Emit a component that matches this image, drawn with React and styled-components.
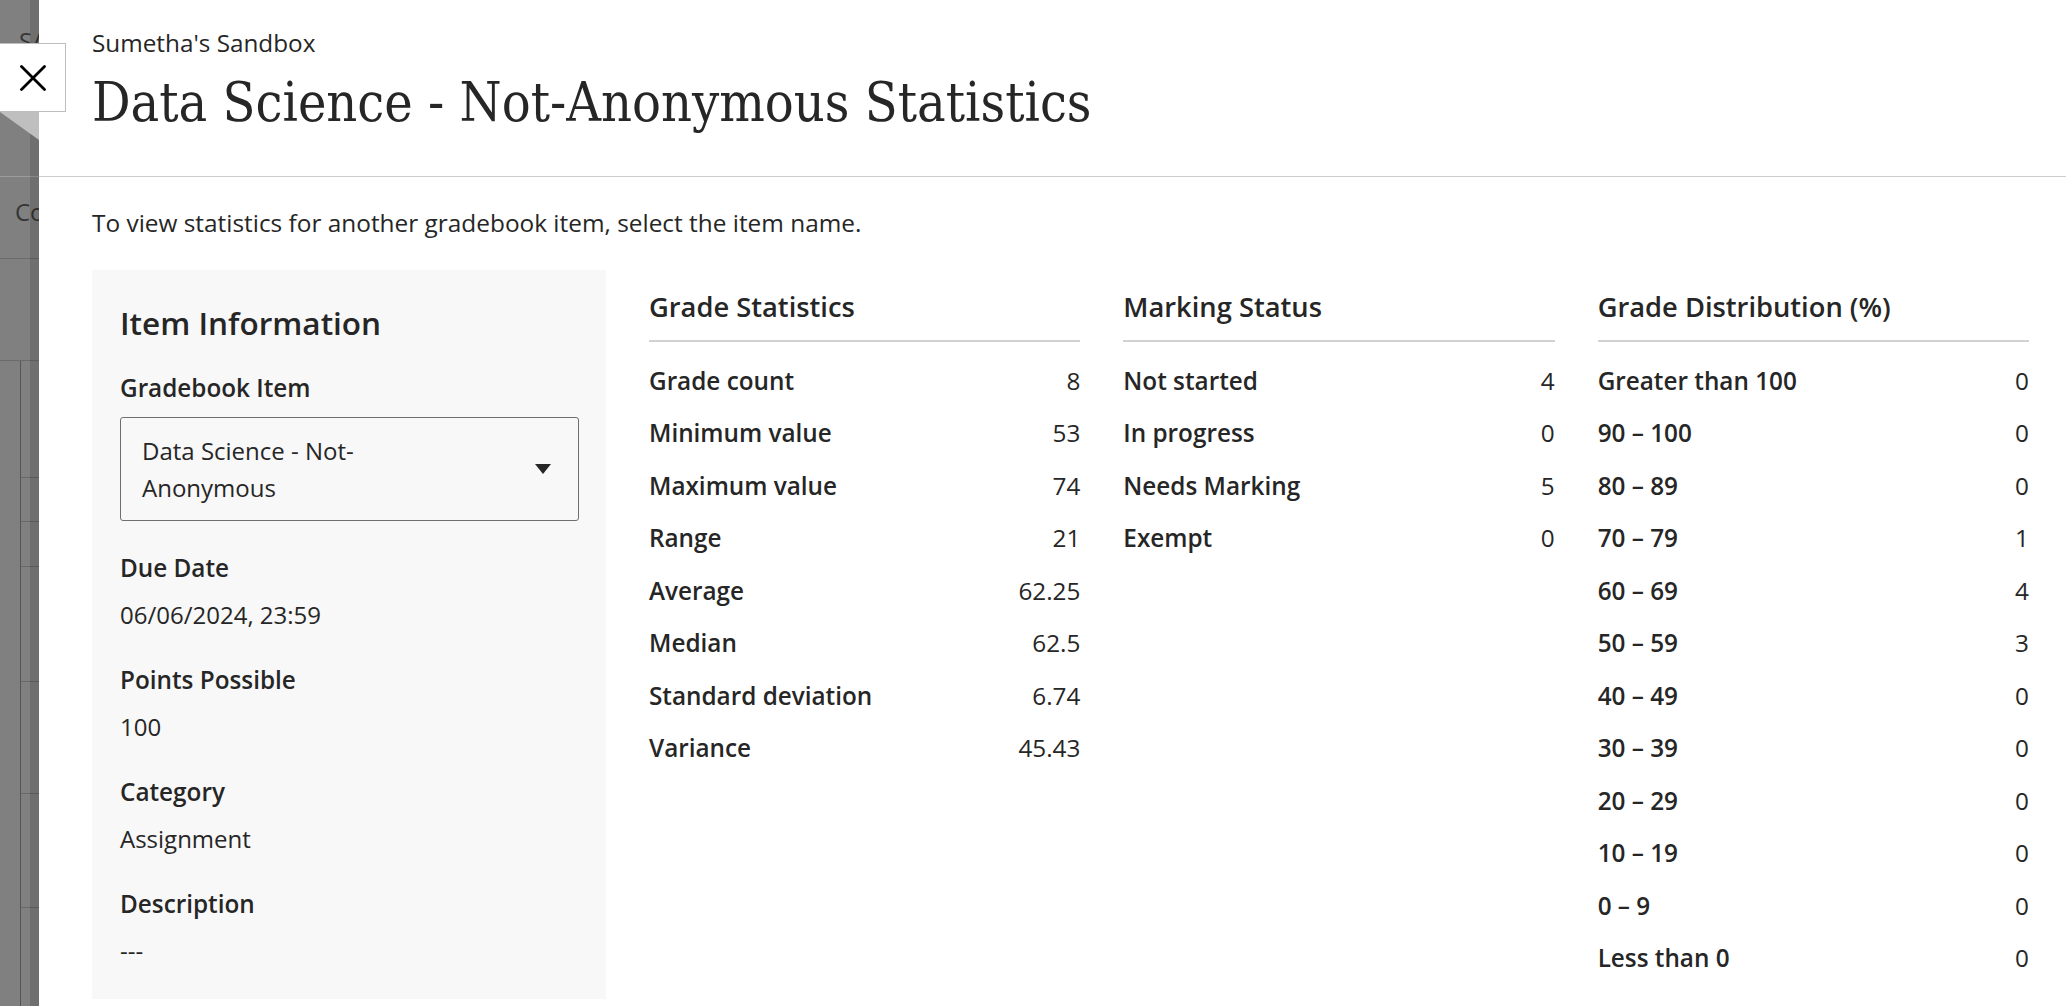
import React from "react";
import styled, { createGlobalStyle } from "styled-components";

const GlobalStyle = createGlobalStyle`
  html, body {
    margin: 0;
    padding: 0;
    height: 100%;
    overflow: hidden;
  }
  body {
    font-family: "Open Sans", "Noto Sans", sans-serif;
    color: #262626;
    background: #ffffff;
  }
  #root {
    height: 100%;
  }
`;

const Page = styled.div`
  position: relative;
  display: flex;
  height: 100vh;
`;

/* the dimmed gradebook page peeking out on the left */
const Backdrop = styled.div`
  position: relative;
  flex: 0 0 39px;
  overflow: hidden;
  background: #808080;
  color: #363636;
  font-size: 24px;
  line-height: 36px;
  white-space: nowrap;
  &::after {
    content: "";
    position: absolute;
    top: 0;
    right: 0;
    bottom: 0;
    width: 9px;
    background: rgba(0, 0, 0, 0.13);
  }
`;

const BackdropBlock = styled.div`
  box-sizing: border-box;
  height: ${(p) => p.$h}px;
  padding: ${(p) => p.$pad || "0"};
  border-bottom: 1px solid ${(p) => p.$line || "#6a6a6a"};
`;

const BackdropGrid = styled.div`
  display: flex;
`;

const BackdropGutter = styled.div`
  flex: 0 0 20px;
  border-right: 1px solid #555555;
`;

const BackdropCells = styled.div`
  flex: 1;
`;

const BackdropCell = styled.div`
  box-sizing: border-box;
  height: ${(p) => p.$h}px;
  border-bottom: 1px solid #686868;
`;

const CloseButton = styled.button`
  position: absolute;
  left: -1px;
  top: 43px;
  width: 67px;
  height: 69px;
  box-sizing: border-box;
  padding: 0;
  display: flex;
  align-items: center;
  justify-content: center;
  background: #ffffff;
  border: 1px solid #bdbdbd;
  cursor: pointer;
  z-index: 2;
`;

const Fold = styled.div`
  position: absolute;
  left: 0;
  top: 112px;
  width: 0;
  height: 0;
  border-top: 28px solid #bfbfbf;
  border-left: 39px solid transparent;
  z-index: 2;
`;

const Panel = styled.main`
  flex: 1;
  min-width: 0;
  display: flex;
  flex-direction: column;
  background: #ffffff;
`;

const Header = styled.header`
  padding: 25px 53px 41px;
  border-bottom: 1px solid #cdcdcd;
`;

const Course = styled.div`
  font-size: 24.3px;
  line-height: 36px;
`;

const Title = styled.h1`
  margin: 10px 0 0;
  font-family: "DejaVu Serif Condensed", "DejaVu Serif", serif;
  font-weight: 400;
  font-size: 53.5px;
  line-height: 64px;
  color: #262626;
`;

const Content = styled.div`
  padding: 28px 37px 0 53px;
`;

const Hint = styled.p`
  margin: 0;
  font-size: 24.4px;
  line-height: 36px;
`;

const Layout = styled.div`
  margin-top: 29px;
  display: grid;
  grid-template-columns: 514px repeat(3, 1fr);
  column-gap: 43px;
  align-items: start;
`;

const InfoCard = styled.section`
  background: #f8f8f8;
  padding: 31px 27px 30px 28px;
`;

const CardTitle = styled.h2`
  margin: 0 0 25px;
  font-size: 31.5px;
  font-weight: 600;
  line-height: 44px;
`;

const Field = styled.div`
  & + & {
    margin-top: 29px;
  }
`;

const FieldLabel = styled.div`
  font-size: 24.3px;
  font-weight: 600;
  line-height: 36px;
  margin-bottom: 11px;
`;

const FieldValue = styled.div`
  font-size: 24px;
  line-height: 36px;
`;

const Select = styled.div`
  display: flex;
  align-items: center;
  gap: 56px;
  padding: 14px 27px 14px 21px;
  border: 1px solid #6e6e6e;
  border-radius: 3px;
  cursor: pointer;
`;

const SelectText = styled.div`
  flex: 1;
  font-size: 24px;
  line-height: 37px;
`;

const StatColumn = styled.section`
  padding-top: 17px;
`;

const ColumnTitle = styled.h2`
  margin: 0;
  padding-bottom: 13px;
  border-bottom: 2px solid #d2d2d2;
  font-size: 27.3px;
  font-weight: 600;
  line-height: 40px;
`;

const Rows = styled.dl`
  margin: 0;
  padding-top: 12px;
`;

const Row = styled.div`
  display: flex;
  align-items: center;
  justify-content: space-between;
  height: 52.5px;
  font-size: 24.3px;
`;

const RowLabel = styled.dt`
  font-weight: 600;
`;

const RowValue = styled.dd`
  margin: 0;
`;

const gradeStats = [
  ["Grade count", "8"],
  ["Minimum value", "53"],
  ["Maximum value", "74"],
  ["Range", "21"],
  ["Average", "62.25"],
  ["Median", "62.5"],
  ["Standard deviation", "6.74"],
  ["Variance", "45.43"],
];

const markingStatus = [
  ["Not started", "4"],
  ["In progress", "0"],
  ["Needs Marking", "5"],
  ["Exempt", "0"],
];

const distribution = [
  ["Greater than 100", "0"],
  ["90 – 100", "0"],
  ["80 – 89", "0"],
  ["70 – 79", "1"],
  ["60 – 69", "4"],
  ["50 – 59", "3"],
  ["40 – 49", "0"],
  ["30 – 39", "0"],
  ["20 – 29", "0"],
  ["10 – 19", "0"],
  ["0 – 9", "0"],
  ["Less than 0", "0"],
];

const backdropCells = [117, 44, 45, 115, 112, 114, 120];

const StatBlock = ({ title, rows }) => (
  <StatColumn>
    <ColumnTitle>{title}</ColumnTitle>
    <Rows>
      {rows.map(([label, value]) => (
        <Row key={label}>
          <RowLabel>{label}</RowLabel>
          <RowValue>{value}</RowValue>
        </Row>
      ))}
    </Rows>
  </StatColumn>
);

const CloseIcon = () => (
  <svg width="26" height="26" viewBox="0 0 26 26" aria-hidden="true">
    <path
      d="M1.5 1.5 L24.5 24.5 M24.5 1.5 L1.5 24.5"
      stroke="#000"
      strokeWidth="2.8"
      strokeLinecap="round"
      fill="none"
    />
  </svg>
);

const Caret = () => (
  <svg width="16" height="10" viewBox="0 0 16 10" aria-hidden="true">
    <path d="M0 0 H16 L8 10 Z" fill="#262626" />
  </svg>
);

const App = () => {
  return (
    <>
      <GlobalStyle />
      <Page>
        <Backdrop>
          <BackdropBlock $h={177} $pad="23px 0 0 19px" $line="#9c9c9c">
            SA
          </BackdropBlock>
          <BackdropBlock $h={82} $pad="17px 0 0 15px">
            Co
          </BackdropBlock>
          <BackdropBlock $h={102} />
          <BackdropGrid>
            <BackdropGutter />
            <BackdropCells>
              {backdropCells.map((h, i) => (
                <BackdropCell key={i} $h={h} />
              ))}
            </BackdropCells>
          </BackdropGrid>
        </Backdrop>

        <CloseButton aria-label="Close">
          <CloseIcon />
        </CloseButton>
        <Fold />

        <Panel>
          <Header>
            <Course>Sumetha's Sandbox</Course>
            <Title>Data Science - Not-Anonymous Statistics</Title>
          </Header>

          <Content>
            <Hint>
              To view statistics for another gradebook item, select the item
              name.
            </Hint>

            <Layout>
              <InfoCard>
                <CardTitle>Item Information</CardTitle>
                <Field>
                  <FieldLabel>Gradebook Item</FieldLabel>
                  <Select>
                    <SelectText>Data Science - Not-Anonymous</SelectText>
                    <Caret />
                  </Select>
                </Field>
                <Field>
                  <FieldLabel>Due Date</FieldLabel>
                  <FieldValue>06/06/2024, 23:59</FieldValue>
                </Field>
                <Field>
                  <FieldLabel>Points Possible</FieldLabel>
                  <FieldValue>100</FieldValue>
                </Field>
                <Field>
                  <FieldLabel>Category</FieldLabel>
                  <FieldValue>Assignment</FieldValue>
                </Field>
                <Field>
                  <FieldLabel>Description</FieldLabel>
                  <FieldValue>---</FieldValue>
                </Field>
              </InfoCard>

              <StatBlock title="Grade Statistics" rows={gradeStats} />
              <StatBlock title="Marking Status" rows={markingStatus} />
              <StatBlock title="Grade Distribution (%)" rows={distribution} />
            </Layout>
          </Content>
        </Panel>
      </Page>
    </>
  );
};

export default App;
